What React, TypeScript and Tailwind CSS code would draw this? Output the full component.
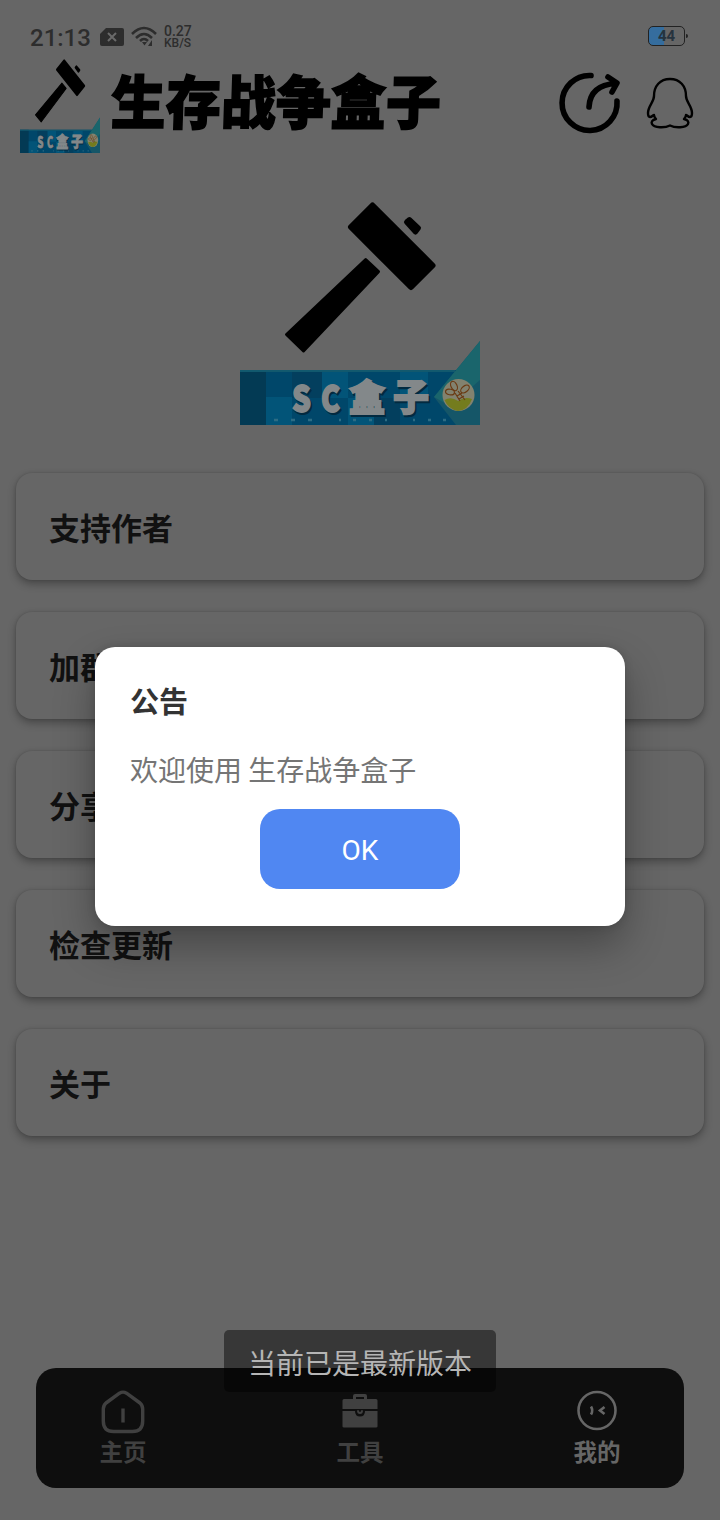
import React from 'react';

const menuItems = ['支持作者', '加群', '分享', '检查更新', '关于'];

const BannerText: React.FC = () => (
  <>
    <text x="52" y="222" fontSize="36" textLength="19" lengthAdjust="spacingAndGlyphs">S</text>
    <text x="81" y="222" fontSize="36" textLength="19" lengthAdjust="spacingAndGlyphs">C</text>
    <text x="109" y="221" fontSize="36">盒</text>
    <text x="153" y="221" fontSize="36">子</text>
  </>
);

const Logo: React.FC<{ className: string }> = ({ className }) => (
  <svg viewBox="0 0 240 235" preserveAspectRatio="none" className={className}>
    <g fill="#000" stroke="#000" strokeLinejoin="round">
      <path d="M132.5 15.5L192.5 75.5L171 97L111 37Z" strokeWidth="6" />
      <path d="M166.500 32L169.500 29.500L178.500 38L175.500 42Z" strokeWidth="5" />
      <path d="M125.700 69.500L138.500 81.700L63.500 161L46.500 144.500Z" strokeWidth="3" />
    </g>
    <path d="M0 180H240V235H0Z" fill="#00476a" />
    <path d="M0 180H26V235H0Z" fill="#033a54" />
    <path d="M26 207H52V235H26ZM82 182H108V208H82ZM160 182H188V208H160ZM108 208H134V235H108Z" fill="#025478" />
    <path d="M52 182H82V208H52ZM134 208H160V235H134Z" fill="#033f5e" />
    <path d="M0 180H215V182H0Z" fill="#12596e" />
    <path d="M240 151L194 207L216 235H240Z" fill="#155668" />
    <path d="M240 151L194 207L210 216L240 190Z" fill="#1a656c" />
    <circle cx="218.500" cy="205" r="16" fill="#82826f" />
    <path d="M204.500 210Q211 206 218 211Q225 206 232 209Q228 220 218 221Q208 219 204.500 210Z" fill="#747c1e" />
    <g fill="none" stroke="#6b3b14" strokeWidth="1.200">
      <ellipse cx="214" cy="196" rx="3" ry="5" transform="rotate(-25 214 196)" />
      <ellipse cx="225" cy="199" rx="5" ry="3" transform="rotate(-40 225 199)" />
      <ellipse cx="210" cy="202" rx="4.500" ry="2.800" transform="rotate(10 210 202)" />
      <path d="M218 201L225 210M215 203L220 211M217 206L222 203M219 209L224 206" />
    </g>
    <path
      d="M34 230H38M51 230H55M68 230H72M99 230H101M113 230H116M129 230H132M145 230H147M173 230H175M188 230H191M203 230H206"
      stroke="#2d6c84"
      strokeWidth="2.500"
    />
    <g fontFamily="'Noto Sans CJK SC', sans-serif" fontWeight="900" strokeLinejoin="miter">
      <g fill="#022a40" stroke="#022a40" strokeWidth="2" transform="translate(1.5 1.5)">
        <BannerText />
      </g>
      <g fill="#83888a" stroke="#83888a" strokeWidth="1.800">
        <BannerText />
      </g>
    </g>
  </svg>
);

const StatusBar: React.FC = () => (
  <div className="flex h-[54px] items-center pl-[30px] pr-8 pt-[20px] text-[#2d2d2d]">
    <span className="w-[70px] pt-px font-[Roboto] text-[24px] font-medium leading-none">21:13</span>
    <svg viewBox="0 0 24 18" className="h-[18px] w-6">
      <path d="M6 0H22Q24 0 24 2V16Q24 18 22 18H2Q0 18 0 16V6Z" fill="#2d2d2d" />
      <path d="M8 5L16 13M16 5L8 13" stroke="#6a6a6a" strokeWidth="2" />
    </svg>
    <svg viewBox="0 0 28 22" className="ml-[7px] h-[22px] w-7" fill="none" stroke="#2d2d2d" strokeWidth="2.500">
      <path d="M1 8Q13 -4 25 8M5 12Q13 4 21 12M9 15Q13 11 17 15" />
      <path d="M11 16H16L13.500 19.500ZM17 20L21 14V20Z" fill="#2d2d2d" stroke="none" />
    </svg>
    <div className="ml-[5px] font-[Roboto] font-medium leading-[12.5px]">
      <div className="text-[14px]">0.27</div>
      <div className="text-[12px]">KB/S</div>
    </div>
    <div className="mb-[2px] ml-auto flex items-center">
      <div className="flex h-5 w-[37px] items-center justify-center rounded-[5px] border border-[#222] bg-linear-to-r from-[#356d9e] from-44% to-[#666] to-44% font-[Roboto] text-[15px] font-bold text-[#26333e]">
        44
      </div>
      <div className="ml-px h-1 w-[2px] rounded-r bg-[#222]" />
    </div>
  </div>
);

const HomeIcon = () => (
  <svg viewBox="0 0 46 46" className="h-[46px] w-[46px]" fill="none" stroke="currentColor" strokeWidth="3.4" strokeLinejoin="round">
    <path d="M19.5 3.2Q23 1 26.5 3.200L40 13Q42.700 15.500 42.700 19V31Q42.700 41.500 32.500 41.500H13.500Q3.300 41.500 3.300 31V19Q3.300 15.500 6 13Z" />
    <path d="M23 18.500V32.500" />
  </svg>
);

const ToolIcon = () => (
  <svg viewBox="0 0 46 46" className="h-[46px] w-[46px]" fill="currentColor">
    <path d="M16 9V6Q16 4 18 4H28Q30 4 30 6V9H39Q40.500 9 40.500 10.500V19H5.500V10.500Q5.500 9 7 9ZM19 9H27V7H19Z" fillRule="evenodd" />
    <path d="M5.500 21H18Q18 26.500 23 26.500Q28 26.500 28 21H40.500V36.500Q40.500 37.500 39 37.500H7Q5.500 37.500 5.500 36.500Z" />
    <path d="M20 20.500Q20 24 23 24Q26 24 26 20.500L24.500 20Q24 22 23 22Q22 22 21.500 20Z" />
  </svg>
);

const MineIcon = () => (
  <svg viewBox="0 0 46 46" className="h-[46px] w-[46px]" fill="none" stroke="currentColor" strokeWidth="2.6">
    <circle cx="23" cy="20.500" r="18.500" />
    <path d="M17 16.500Q19.500 20.500 17 24.500M30.500 17L26 20.500L30.500 24" />
  </svg>
);

const tabs = [
  { label: '主页', Icon: HomeIcon, color: 'text-[#404040]' },
  { label: '工具', Icon: ToolIcon, color: 'text-[#404040]' },
  { label: '我的', Icon: MineIcon, color: 'text-[#666]' },
];

export default function App() {
  return (
    <div className="relative flex h-[1520px] w-[720px] flex-col overflow-hidden bg-[#666] font-['Noto_Sans_CJK_SC',sans-serif]">
      <StatusBar />

      <header className="flex h-[99px] items-start pl-5">
        <Logo className="h-[99px] w-20" />
        <h1 className="ml-[11px] mt-[5px] w-[332px] origin-center -skew-x-2 scale-y-106 whitespace-nowrap text-[55px] font-black leading-[80px] text-black [-webkit-text-stroke:1.5px_black]">
          生存战争盒子
        </h1>
        <svg viewBox="0 0 64 64" className="ml-[115px] mt-[17px] h-16 w-16" fill="none" stroke="#000" strokeWidth="5.600" strokeLinecap="round" strokeLinejoin="round">
          <path d="M33 4.500A27.500 27.500 0 1 0 59 30" />
          <path d="M31 36Q32 14 58 12.500M50 6L59 12L54 21" />
        </svg>
        <svg viewBox="0 0 48 54" className="ml-[24px] mt-[22px] h-[54px] w-12" fill="none" stroke="#000" strokeWidth="2.400" strokeLinejoin="round">
          <path d="M24 3C14 3 8 10 8 20C8 26 2 30 2 37C2 40 3 41 4 41C6 41 7 39 8 39C8 41 9 42 10 43C6 44 5 46 6 48C8 52 19 52 24 49.500C29 52 40 52 42 48C43 46 42 44 38 43C39 42 40 41 40 39C41 39 42 41 44 41C45 41 46 40 46 37C46 30 40 26 40 20C40 10 34 3 24 3Z" />
        </svg>
      </header>

      <Logo className="mx-auto mt-[37px] h-[235px] w-60 shrink-0" />

      <main className="mt-12 flex flex-col gap-8 px-4">
        {menuItems.map((item) => (
          <div
            key={item}
            className="flex h-[107px] items-center rounded-2xl bg-[#666] pl-[33px] pt-[2px] text-[31px] font-bold text-[#111] shadow-[0_4px_8px_rgba(0,0,0,0.3),0_0_3px_rgba(0,0,0,0.15)]"
          >
            {item}
          </div>
        ))}
      </main>

      <nav className="mx-9 mb-8 mt-auto flex h-[120px] justify-between rounded-[20px] bg-[#0e0e0e] px-[27px]">
        {tabs.map(({ label, Icon, color }) => (
          <div key={label} className={`flex w-[120px] flex-col items-center pt-[22px] ${color}`}>
            <Icon />
            <span className="-mt-[2px] text-[23.5px] font-bold leading-[34px]">{label}</span>
          </div>
        ))}
      </nav>

      {/* Announcement dialog */}
      <div className="absolute left-[95px] top-[647px] flex h-[279px] w-[530px] flex-col rounded-[20px] bg-white px-[35px] pt-[31px] shadow-[0_20px_40px_rgba(0,0,0,0.3),0_0_10px_rgba(0,0,0,0.14)]">
        <h2 className="text-[29px] font-bold leading-[44px] text-[#333]">公告</h2>
        <p className="mt-[27px] text-[28px] leading-[40px] text-[#757575]">欢迎使用 生存战争盒子</p>
        <button className="mx-auto mt-5 h-20 w-[200px] rounded-[20px] bg-[#5087f2] pt-[3px] font-[Roboto] text-[28px] text-white">
          OK
        </button>
      </div>

      {/* Toast */}
      <div className="absolute left-[224px] top-[1330px] flex h-[62px] w-[272px] items-center justify-center rounded-[5px] bg-black/46 pt-px">
        <span className="text-[28px] leading-none text-[#b5b5b5]">当前已是最新版本</span>
      </div>
    </div>
  );
}
